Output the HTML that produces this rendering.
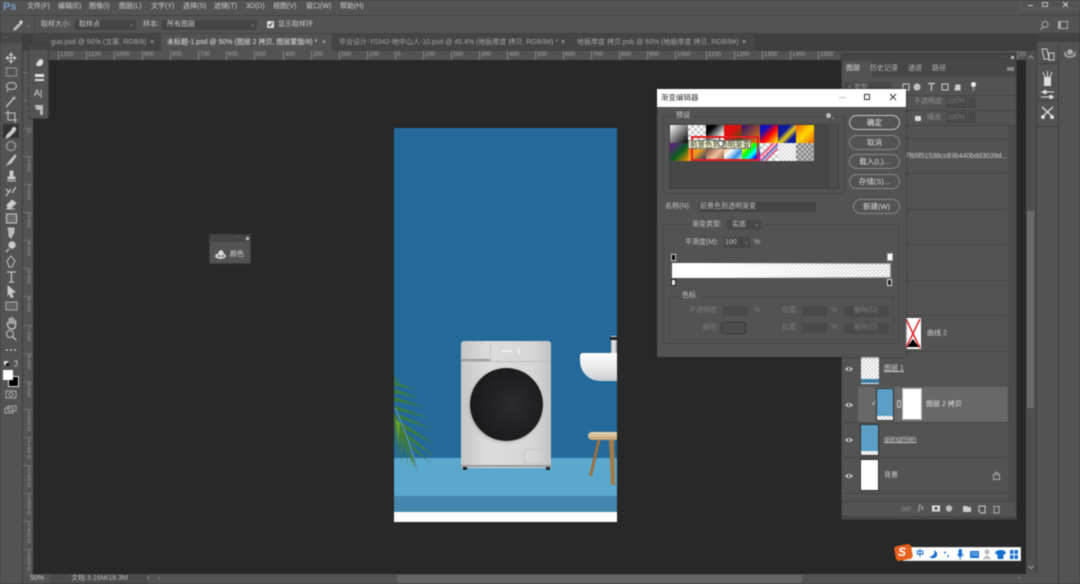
<!DOCTYPE html>
<html><head><meta charset="utf-8"><style>
*{box-sizing:border-box;margin:0;padding:0}
html,body{width:1080px;height:584px;overflow:hidden;background:#282828}
body{font-family:"Liberation Sans","Noto Sans CJK SC",sans-serif;color:#cfcfcf;font-size:7px;position:relative}
#r{position:absolute;left:0;top:0;width:1080px;height:584px;filter:blur(.5px);overflow:hidden}
.a,.t{position:absolute;white-space:nowrap}
.t{line-height:10px}
.rl{position:absolute;top:51px;font-size:6px;color:#a5a5a5;line-height:9px;border-left:1px solid #858585;padding-left:1px;height:9px}
.vr{position:absolute;left:26px;width:6px;font-size:6px;line-height:5.6px;color:#a0a0a0;text-align:center;white-space:normal}
.vr::before{content:"";position:absolute;left:-3px;width:10px;top:-2px;border-top:1px solid #6f6f6f}
.btn{position:absolute;border:1px solid #888;border-radius:8px;text-align:center;color:#ddd;font-size:7.5px;line-height:13px;height:15px}
.sw{position:absolute;width:18px;height:18px}
.ck{background:repeating-conic-gradient(#c8c8c8 0 25%,#fff 0 50%) 0 0/6px 6px}
.ck2{background:repeating-conic-gradient(#d5d5d5 0 25%,#fff 0 50%) 0 0/4px 4px}
.dis{position:absolute;background:#4a4a4a;border:1px solid #494949}
.row{position:absolute;left:844px;width:164px;height:1px;background:#454545}
svg{position:absolute;overflow:visible}
</style></head><body><div id="r">

<!-- top bars -->
<div class="a" style="left:0;top:0;width:1080px;height:16px;background:#535353"></div>
<div class="a" style="left:0;top:15px;width:1080px;height:1px;background:#444"></div>
<div class="a" style="left:0;top:16px;width:1080px;height:18px;background:#535353"></div>
<div class="a" style="left:0;top:33px;width:1080px;height:1px;background:#434343"></div>
<div class="t" style="left:3px;top:0;font-size:11px;line-height:15px;font-weight:bold;color:#6f9cc4">Ps</div>
<div class="t" style="left:27px;top:2px;color:#d0d0d0">文件(F)</div>
<div class="t" style="left:58px;top:2px;color:#d0d0d0">编辑(E)</div>
<div class="t" style="left:89px;top:2px;color:#d0d0d0">图像(I)</div>
<div class="t" style="left:119px;top:2px;color:#d0d0d0">图层(L)</div>
<div class="t" style="left:151px;top:2px;color:#d0d0d0">文字(Y)</div>
<div class="t" style="left:183px;top:2px;color:#d0d0d0">选择(S)</div>
<div class="t" style="left:214px;top:2px;color:#d0d0d0">滤镜(T)</div>
<div class="t" style="left:246px;top:2px;color:#d0d0d0">3D(D)</div>
<div class="t" style="left:273px;top:2px;color:#d0d0d0">视图(V)</div>
<div class="t" style="left:306px;top:2px;color:#d0d0d0">窗口(W)</div>
<div class="t" style="left:340px;top:2px;color:#d0d0d0">帮助(H)</div>
<!-- window buttons -->
<div class="a" style="left:1021px;top:0;width:59px;height:9px;border:1px solid #5f5f5f;border-top:0"></div>
<div class="a" style="left:1028px;top:5px;width:5px;height:1px;background:#ccc"></div>
<div class="a" style="left:1042px;top:2px;width:6px;height:5px;border:1px solid #bbb"></div>
<svg style="left:1062px;top:1px" width="7" height="7"><path d="M1 1L6 6M6 1L1 6" stroke="#ccc" stroke-width="1.1"/></svg>
<!-- options -->
<svg style="left:11px;top:19px" width="14" height="14"><path d="M2 12L3 9L8 4L10 6L5 11Z" fill="#bbb"/><path d="M8 3L10 1L12 3L10 6Z" fill="#ddd"/></svg>
<div class="t" style="left:26px;top:21px;font-size:6px;color:#aaa">⌄</div>
<div class="a" style="left:34px;top:19px;width:1px;height:12px;background:#444"></div>
<div class="t" style="left:41px;top:20px;color:#c5c5c5">取样大小:</div>
<div class="a" style="left:75px;top:20px;width:61px;height:10px;background:#454545;border-radius:1px"></div>
<div class="t" style="left:79px;top:20px;color:#ccc">取样点</div>
<div class="t" style="left:129px;top:20px;font-size:6px;color:#aaa">⌄</div>
<div class="t" style="left:143px;top:20px;color:#c5c5c5">样本:</div>
<div class="a" style="left:162px;top:20px;width:95px;height:10px;background:#454545;border-radius:1px"></div>
<div class="t" style="left:167px;top:20px;color:#ccc">所有图层</div>
<div class="t" style="left:250px;top:20px;font-size:6px;color:#aaa">⌄</div>
<div class="a" style="left:267px;top:21px;width:7px;height:7px;background:#ddd;border-radius:1px"></div>
<svg style="left:267px;top:21px" width="7" height="7"><path d="M1.5 3.5L3 5L5.5 1.5" fill="none" stroke="#333"/></svg>
<div class="t" style="left:278px;top:20px;color:#ccc">显示取样环</div>
<svg style="left:1039px;top:20px" width="11" height="11"><circle cx="6" cy="4.5" r="3" fill="none" stroke="#aaa"/><path d="M4 7L1.5 9.5" stroke="#aaa" stroke-width="1.2"/></svg>
<div class="a" style="left:1058px;top:21px;width:10px;height:8px;border:1px solid #aaa;border-left-width:3px"></div>

<!-- tabs -->
<div class="a" style="left:0;top:34px;width:1080px;height:17px;background:#3f3f3f"></div>
<div class="a" style="left:33px;top:34px;width:128px;height:17px;background:#454545"></div>
<div class="a" style="left:161px;top:34px;width:171px;height:17px;background:#535353"></div>
<div class="a" style="left:333px;top:34px;width:238px;height:17px;background:#454545"></div>
<div class="a" style="left:571px;top:34px;width:184px;height:17px;background:#454545"></div>
<div class="t" style="left:51px;top:38px;color:#a8a8a8">guo.psd @ 50% (文案, RGB/8)</div>
<div class="t" style="left:150px;top:38px;color:#bbb">×</div>
<div class="t" style="left:167px;top:38px;color:#e2e2e2">未标题-1.psd @ 50% (图层 2 拷贝, 图层蒙版/8) *</div>
<div class="t" style="left:322px;top:38px;color:#ccc">×</div>
<div class="t" style="left:339px;top:38px;color:#a5a5a5">毕业设计-Y0342-地中山人-10.psd @ 45.4% (地板厚度 拷贝, RGB/8#) *</div>
<div class="t" style="left:561px;top:38px;color:#ccc">×</div>
<div class="t" style="left:577px;top:38px;color:#a5a5a5">地板厚度 拷贝.psb @ 50% (地板厚度 拷贝, RGB/8#)</div>
<div class="t" style="left:742px;top:38px;color:#ccc">×</div>

<!-- rulers -->
<div class="a" style="left:23px;top:51px;width:1004px;height:9px;background:#535353"></div>
<div class="a" style="left:23px;top:51px;width:10px;height:523px;background:#535353"></div>
<div class="rl" style="left:58px">1200</div><div class="rl" style="left:86px">1100</div><div class="rl" style="left:114px">1000</div><div class="rl" style="left:142px">900</div><div class="rl" style="left:170px">800</div><div class="rl" style="left:198px">700</div><div class="rl" style="left:226px">600</div><div class="rl" style="left:254px">500</div><div class="rl" style="left:283px">400</div><div class="rl" style="left:311px">300</div><div class="rl" style="left:339px">200</div><div class="rl" style="left:367px">100</div><div class="rl" style="left:395px">0</div><div class="rl" style="left:423px">100</div><div class="rl" style="left:451px">200</div><div class="rl" style="left:479px">300</div><div class="rl" style="left:507px">400</div><div class="rl" style="left:535px">500</div><div class="rl" style="left:563px">600</div><div class="rl" style="left:591px">700</div><div class="rl" style="left:619px">800</div><div class="rl" style="left:647px">900</div><div class="rl" style="left:675px">1000</div><div class="rl" style="left:706px">1100</div><div class="rl" style="left:734px">1200</div><div class="rl" style="left:762px">1300</div><div class="rl" style="left:790px">1400</div><div class="rl" style="left:818px">1500</div><div class="rl" style="left:1017px">200</div>
<div class="vr" style="top:74px">2<br>0<br>0</div><div class="vr" style="top:102px">1<br>0<br>0</div><div class="vr" style="top:130px">0</div><div class="vr" style="top:158px">1<br>0<br>0</div><div class="vr" style="top:186px">2<br>0<br>0</div><div class="vr" style="top:214px">3<br>0<br>0</div><div class="vr" style="top:242px">4<br>0<br>0</div><div class="vr" style="top:270px">5<br>0<br>0</div><div class="vr" style="top:298px">6<br>0<br>0</div><div class="vr" style="top:327px">7<br>0<br>0</div><div class="vr" style="top:355px">8<br>0<br>0</div><div class="vr" style="top:383px">9<br>0<br>0</div><div class="vr" style="top:411px">1<br>0<br>0<br>0</div><div class="vr" style="top:439px">1<br>1<br>0<br>0</div><div class="vr" style="top:467px">1<br>2<br>0<br>0</div><div class="vr" style="top:495px">1<br>3<br>0<br>0</div><div class="vr" style="top:523px">1<br>4<br>0<br>0</div><div class="vr" style="top:551px">1<br>5<br>0<br>0</div>

<!-- left toolbar -->
<div class="a" style="left:0;top:34px;width:23px;height:550px;background:#535353"></div>
<div class="a" style="left:22px;top:34px;width:1px;height:550px;background:#3c3c3c"></div>
<div class="a" style="left:0;top:34px;width:22px;height:9px;background:#474747"></div>
<div class="t" style="left:3px;top:34px;font-size:6px;color:#bbb">‥</div>
<div class="a" style="left:3px;top:124px;width:16px;height:14px;background:#333"></div>
<svg style="left:0;top:50px" width="22" height="370" fill="none" stroke="#c4c4c4" stroke-width="1">
<path d="M11 3V13M6 8H16M11 3L9.5 5H12.5ZM11 13L9.5 11H12.5ZM6 8L8 6.5V9.5ZM16 8L14 6.5V9.5Z" fill="#c4c4c4"/>
<rect x="6.5" y="18" width="10" height="8" stroke-dasharray="1.5 1"/>
<ellipse cx="11.5" cy="36" rx="5" ry="3.5"/><path d="M8 39L7 42"/>
<path d="M6 57L13 49" stroke-width="1.4"/><path d="M14 46V50M12 48H16"/>
<path d="M8 60V70H17M5 63H15V73"/>
<path d="M6 88L7 85L12 80L14 82L9 87Z" fill="#ccc"/><path d="M12 79L14 77L16 79L14 82Z" fill="#ddd"/>
<circle cx="11" cy="96" r="4.5" stroke-dasharray="1.5 1" stroke-width="1.4"/>
<path d="M7 115L9 112L15 105L16 106L11 113Z" fill="#ccc"/>
<path d="M8 127H15V129H8ZM10 121H13V127H10Z" fill="#ccc"/><path d="M7 131H16"/>
<path d="M6 146L11 139M12 143L16 137M6 139L9 142" stroke-width="1.3"/>
<path d="M7 155L12 150L16 153L11 158H8Z" fill="#ccc"/><path d="M6 159H15"/>
<rect x="6.5" y="164" width="10" height="9" fill="#6d6d6d" stroke="#ccc"/>
<path d="M8 178H14V182L11 188L9 186V182Z" fill="#b8b8b8"/>
<circle cx="12" cy="195" r="3.2" fill="#ccc"/><path d="M9 199L6 202" stroke-width="1.4"/>
<path d="M11 206L15 211L12 217H9L7 211Z"/>
<path d="M7 222H16M11.5 222V232M9 232H14" stroke-width="1.3"/>
<path d="M8 236L15 242L11.5 242.5L13 247L11 247.5L9.5 243L8 245Z" fill="#ccc"/>
<rect x="6" y="252" width="11" height="8" stroke="#aaa" fill="#636363"/>
<path d="M7.5 272V275Q8.5 279 12 279Q15.5 279 15.5 275V270M9.5 274V268M11.5 274V267M13.5 274V268" stroke-width="1.4"/>
<circle cx="10" cy="284" r="3.5"/><path d="M13 287L16 290" stroke-width="1.4"/>
<path d="M6 300H8M10 300H12M14 300H16" stroke-width="1.5"/>
<path d="M14 311H17V315M14 316H17" stroke="#bbb"/>
<rect x="6" y="341" width="10" height="7" stroke="#aaa"/><circle cx="11" cy="344.5" r="2" stroke="#aaa"/>
<rect x="5" y="358" width="8" height="5" stroke="#aaa"/><rect x="8" y="356" width="8" height="5" stroke="#aaa"/>
</svg>
<div class="a" style="left:4px;top:361px;width:4px;height:4px;background:#ddd"></div>
<div class="a" style="left:6px;top:363px;width:3px;height:3px;background:#111"></div>
<div class="a" style="left:8px;top:376px;width:11px;height:11px;background:#000;border:1px solid #ddd"></div>
<div class="a" style="left:3px;top:370px;width:10px;height:10px;background:#fff"></div>

<!-- small floating panel -->
<div class="a" style="left:28px;top:43px;width:21px;height:76px;background:#535353;border:1px solid #3e3e3e"></div>
<div class="a" style="left:29px;top:44px;width:19px;height:6px;background:#444"></div>
<svg style="left:28px;top:43px" width="21" height="76">
<circle cx="11" cy="19" r="4.2" fill="#ddd"/><path d="M8 22A4.2 4.2 0 0 1 14 16Q10 16 8 22Z" fill="#555"/>
<path d="M7 31H16V34H7Z M7 36H16V38H7Z" fill="#ddd"/>
<path d="M7 62H15V72H12V67H10Q7 67 7 62Z" fill="#bbb"/>
</svg>
<div class="t" style="left:34px;top:88px;font-size:9px;color:#ddd">A|</div>

<!-- document -->
<div class="a" style="left:394px;top:128px;width:223px;height:394px;background:#236a9a;overflow:hidden">
<div class="a" style="left:0;top:330px;width:223px;height:38px;background:#5ba8ce"></div>
<div class="a" style="left:0;top:368px;width:223px;height:16px;background:#4486ad"></div>
<div class="a" style="left:0;top:384px;width:223px;height:10px;background:#fff"></div>
<!-- washer -->
<div class="a" style="left:67px;top:213px;width:90px;height:127px;background:linear-gradient(90deg,#c6c6c6,#dcdcdc 30%,#d6d6d6 80%,#c4c4c4);border-radius:3px 3px 0 0"></div>
<div class="a" style="left:67px;top:231px;width:29px;height:1.5px;background:#9a9a9a"></div>
<div class="a" style="left:67px;top:232.5px;width:90px;height:1px;background:#bdbdbd"></div>
<div class="a" style="left:96px;top:215px;width:1px;height:17px;background:#c4c4c4"></div>
<div class="a" style="left:67px;top:337px;width:90px;height:2px;background:#999"></div>
<div class="a" style="left:69px;top:339px;width:4px;height:2.5px;background:#222"></div>
<div class="a" style="left:152px;top:339px;width:4px;height:2.5px;background:#222"></div>
<div class="a" style="left:75.5px;top:240px;width:73px;height:73px;border-radius:50%;background:radial-gradient(circle at 58% 50%,#2b2b2d,#1b1b1d 70%);box-shadow:-1px 1px 3px #aaa"></div>
<div class="a" style="left:130px;top:321px;width:23px;height:15px;border:1px solid #c6c6c6;border-radius:2px"></div>
<div class="a" style="left:108px;top:222px;width:10px;height:2px;background:#f0f0f0"></div>
<div class="a" style="left:124px;top:221px;width:2px;height:5px;background:#eee"></div>
<!-- sink -->
<div class="a" style="left:217px;top:208px;width:6px;height:17px;background:linear-gradient(90deg,#bbb,#eee,#999)"></div>
<div class="a" style="left:216px;top:209px;width:7px;height:3px;background:#222"></div>
<div class="a" style="left:186px;top:225px;width:40px;height:28px;background:linear-gradient(#fff,#e6e6e6 60%,#c9ced4);border-radius:3px 0 0 20px"></div>
<!-- stool -->
<svg style="left:190px;top:300px" width="40" height="60"><path d="M14 10L5 48H8L17 10Z" fill="#9b6f3f"/><path d="M25 10L27 57H31L30 10Z" fill="#a47a48"/></svg>
<div class="a" style="left:194px;top:304px;width:34px;height:8px;background:linear-gradient(#e6d8b4,#c59f6f);border-radius:4px 0 0 4px"></div>
<!-- palm -->
<svg style="left:0;top:245px" width="44" height="100">
<g fill="#3c7a3e">
<path d="M0 3L6 9L0 6Z"/><path d="M0 8L21 17L0 12Z"/><path d="M0 16L26 25L0 20Z"/><path d="M0 24L31 34L0 28Z"/><path d="M1 33L36 45L1 37Z"/><path d="M4 41L41 57L4 45Z"/><path d="M7 49L42 72L6 54Z"/><path d="M10 58L41 84L9 63Z"/><path d="M13 67L36 90L12 71Z"/>
</g>
<g fill="#447f2e">
<path d="M0 40L1 75L3 44Z"/><path d="M3 46L4 86L7 50Z"/><path d="M6 54L8 90L10 58Z"/><path d="M9 62L14 94L12 66Z"/><path d="M12 72L20 96L15 75Z"/><path d="M15 80L24 99L18 82Z"/>
</g>
<path d="M2 46L4 70L6 50Z" fill="#6aa22f"/>
<path d="M1 35Q8 50 13 64T24 99" stroke="#5a92b4" stroke-width="1.2" fill="none"/>
</svg>
</div>

<!-- colour mini panel -->
<div class="a" style="left:209px;top:234px;width:42px;height:30px;background:#535353;border:1px solid #3e3e3e"></div>
<div class="a" style="left:210px;top:235px;width:40px;height:7px;background:#454545"></div>
<div class="t" style="left:234px;top:233px;font-size:6px;color:#bbb">‥</div>
<div class="a" style="left:246px;top:237px;width:3px;height:3px;background:#bbb"></div>
<svg style="left:214px;top:250px" width="14" height="10"><ellipse cx="6.5" cy="6" rx="5.5" ry="3" fill="#ccc"/><circle cx="7" cy="2.8" r="2.5" fill="#ddd"/><circle cx="5" cy="6" r="1" fill="#555"/><circle cx="8.5" cy="6" r="1" fill="#555"/></svg>
<div class="t" style="left:230px;top:250px;color:#d8d8d8">颜色</div>

<!-- scrollbar and right docks -->
<div class="a" style="left:1026px;top:51px;width:11px;height:523px;background:#4f4f4f"></div>
<div class="a" style="left:1027px;top:211px;width:7px;height:197px;background:#6b6b6b"></div>
<svg style="left:1028px;top:55px" width="6" height="515" fill="none" stroke="#999"><path d="M0.5 3.5L3 1L5.5 3.5M0.5 511L3 513.5L5.5 511"/></svg>
<div class="a" style="left:1037px;top:34px;width:43px;height:550px;background:#535353"></div>
<div class="a" style="left:1036px;top:51px;width:1px;height:533px;background:#3f3f3f"></div>
<div class="a" style="left:1058px;top:34px;width:1px;height:550px;background:#3f3f3f"></div>
<div class="a" style="left:1037px;top:34px;width:43px;height:8px;background:#434343"></div>
<div class="a" style="left:1037px;top:63px;width:21px;height:1px;background:#414141"></div>
<div class="a" style="left:1037px;top:100px;width:21px;height:1px;background:#414141"></div>
<div class="a" style="left:1037px;top:126px;width:21px;height:1px;background:#414141"></div>
<svg style="left:1040px;top:47px" width="16" height="14" fill="none" stroke="#ccc"><path d="M2 2H7L9 12H4Z"/><rect x="9" y="6" width="5" height="7"/></svg>
<svg style="left:1040px;top:71px" width="16" height="56" fill="#ddd" stroke="#ddd">
<path d="M4 6H11V15H4Z" stroke="none"/><path d="M5 6L3 1M7.5 6V0M10 6L12 1" fill="none"/>
<path d="M1 21H14M1 26H14" fill="none"/><circle cx="5" cy="21" r="1.5"/><circle cx="11" cy="26" r="1.5"/>
<path d="M2 36L13 46M13 36L2 46" fill="none" stroke-width="1.3"/><circle cx="3" cy="46" r="1.5"/><circle cx="12" cy="46" r="1.5"/>
</svg>
<svg style="left:1063px;top:47px" width="14" height="12"><ellipse cx="7" cy="7" rx="6" ry="4" fill="#999"/><circle cx="7" cy="5" r="3.5" fill="#aaa" stroke="#444"/></svg>

<!-- layers panel -->
<div class="a" style="left:841px;top:53px;width:176px;height:467px;background:#535353;border:1px solid #3a3a3a"></div>
<div class="a" style="left:842px;top:54px;width:174px;height:7px;background:#454545"></div>
<div class="a" style="left:842px;top:61px;width:174px;height:16px;background:#474747"></div>
<div class="a" style="left:842px;top:61px;width:30px;height:16px;background:#535353"></div>
<div class="t" style="left:846px;top:64px;color:#e0e0e0">图层</div>
<div class="t" style="left:870px;top:64px;color:#b5b5b5">历史记录</div>
<div class="t" style="left:908px;top:64px;color:#b5b5b5">通道</div>
<div class="t" style="left:932px;top:64px;color:#b5b5b5">路径</div>
<div class="a" style="left:1007px;top:67px;width:7px;height:4px;background:#888"></div>
<div class="t" style="left:1000px;top:53px;font-size:6px;color:#bbb">‥</div>
<div class="a" style="left:1011px;top:56px;width:3px;height:3px;background:#bbb"></div>
<div class="a" style="left:844px;top:82px;width:47px;height:11px;background:#484848"></div>
<div class="t" style="left:848px;top:83px;color:#999">⌕ 类型</div>
<svg style="left:900px;top:81px" width="90" height="12" fill="none" stroke="#ccc"><rect x="3" y="3" width="6" height="6"/><circle cx="17" cy="6" r="3" fill="#bbb"/><path d="M28 2.5H35M31.5 2.5V10" stroke-width="1.3"/><rect x="42" y="3" width="6" height="6"/><path d="M56 4H60V9H55Z" fill="#ccc"/></svg>
<div class="a" style="left:971px;top:82px;width:5px;height:5px;border-radius:50%;background:#ededed"></div>
<div class="a" style="left:972px;top:87px;width:3px;height:4px;background:#777"></div>
<div class="a" style="left:842px;top:95px;width:174px;height:1px;background:#444"></div>
<div class="t" style="left:914px;top:97px;color:#8f8f8f">不透明度:</div>
<div class="a" style="left:946px;top:97px;width:21px;height:11px;background:#484848"></div>
<div class="t" style="left:947px;top:97px;color:#777">100%</div>
<div class="a" style="left:968px;top:97px;width:8px;height:11px;background:#484848"></div>
<div class="a" style="left:842px;top:110px;width:174px;height:1px;background:#444"></div>
<div class="a" style="left:915px;top:116px;width:6px;height:5px;background:#ddd;border-radius:1px"></div>
<div class="t" style="left:927px;top:113px;color:#8f8f8f">填充:</div>
<div class="a" style="left:946px;top:112px;width:21px;height:11px;background:#484848"></div>
<div class="t" style="left:947px;top:113px;color:#777">100%</div>
<div class="a" style="left:968px;top:112px;width:8px;height:11px;background:#484848"></div>
<div class="a" style="left:842px;top:125px;width:174px;height:1px;background:#444"></div>
<div class="a" style="left:1008px;top:126px;width:8px;height:375px;background:#4b4b4b"></div>
<div class="row" style="top:138px"></div><div class="row" style="top:173px"></div><div class="row" style="top:209px"></div><div class="row" style="top:244px"></div><div class="row" style="top:280px"></div><div class="row" style="top:315px"></div><div class="row" style="top:351px"></div><div class="row" style="top:422px"></div><div class="row" style="top:457px"></div><div class="row" style="top:493px"></div>
<div class="t" style="left:905px;top:152px;color:#d0d0d0">7f65f51538cc83b440bdd3039d...</div>
<!-- curves row -->
<div class="a" style="left:905px;top:318px;width:16px;height:31px;background:#fff"></div>
<svg style="left:905px;top:318px" width="16" height="31"><path d="M2 29L8 21L14 29Z" fill="#000"/><path d="M1 1L15 30M15 1L1 30" stroke="#e03030" stroke-width="1.6"/></svg>
<div class="t" style="left:927px;top:329px;color:#d0d0d0">曲线 2</div>
<!-- layer 1 -->
<div class="a ck2" style="left:861px;top:356px;width:18px;height:28px"></div>
<div class="a" style="left:861px;top:379px;width:18px;height:4px;background:#3d7ea8"></div>
<div class="t" style="left:884px;top:364px;color:#d0d0d0;text-decoration:underline">图层 1</div>
<!-- selected -->
<div class="a" style="left:858px;top:387px;width:150px;height:35px;background:#686868"></div>
<div class="a" style="left:876px;top:388px;width:18px;height:33px;background:#5b9fc6;border:1px solid #2e2e2e"></div>
<div class="a ck2" style="left:877px;top:416px;width:16px;height:4px"></div>
<div class="t" style="left:871px;top:399px;font-size:6px;color:#ccc">↲</div>
<div class="a" style="left:897px;top:400px;width:4px;height:8px;border:1px solid #ccc;border-radius:2px"></div>
<div class="a" style="left:903px;top:389px;width:18px;height:30px;background:#fff;box-shadow:0 0 0 1px #aaa"></div>
<div class="t" style="left:926px;top:400px;color:#e0e0e0">图层 2 拷贝</div>
<!-- qiangmian -->
<div class="a" style="left:860px;top:424px;width:19px;height:32px;background:#5b9fc6;border:1px solid #2e2e2e"></div>
<div class="a ck2" style="left:861px;top:451px;width:17px;height:4px"></div>
<div class="t" style="left:884px;top:435px;color:#d0d0d0;text-decoration:underline">qiangmian</div>
<!-- bg -->
<div class="a" style="left:860px;top:459px;width:19px;height:32px;background:#fff;border:1px solid #2e2e2e"></div>
<div class="t" style="left:884px;top:471px;color:#d0d0d0">背景</div>
<svg style="left:992px;top:471px" width="9" height="9" fill="none" stroke="#aaa"><rect x="1.5" y="3.5" width="6" height="5"/><path d="M3 3.5V2Q4.5 .5 6 2V3.5"/></svg>
<!-- eyes -->
<svg style="left:845px;top:364px" width="9" height="120" fill="#ccc"><path d="M0 5Q4 1 8 5Q4 9 0 5Z"/><path d="M0 41Q4 37 8 41Q4 45 0 41Z"/><path d="M0 76Q4 72 8 76Q4 80 0 76Z"/><path d="M0 112Q4 108 8 112Q4 116 0 112Z"/><circle cx="4" cy="5" r="1.2" fill="#444"/><circle cx="4" cy="41" r="1.2" fill="#444"/><circle cx="4" cy="76" r="1.2" fill="#444"/><circle cx="4" cy="112" r="1.2" fill="#444"/></svg>
<!-- footer -->
<div class="a" style="left:842px;top:501px;width:174px;height:1px;background:#424242"></div>
<div class="a" style="left:842px;top:516px;width:174px;height:3px;background:#474747"></div>
<svg style="left:900px;top:503px" width="105" height="12" fill="none" stroke="#ccc">
<path d="M3 6H9" stroke="#777"/><circle cx="3.5" cy="6" r="2" stroke="#777"/><circle cx="8.5" cy="6" r="2" stroke="#777"/>
<rect x="32" y="2.5" width="8" height="6" fill="#ddd" stroke="none"/><circle cx="36" cy="5.5" r="1.5" fill="#444" stroke="none"/>
<circle cx="49" cy="5.5" r="3.2" fill="#bbb" stroke="none"/>
<path d="M63 3H67L68 4H71V9H63Z" fill="#ccc" stroke="none"/>
<path d="M79 3H85V10H81L79 8Z"/>
<path d="M93 3.5H100M94 4V10H99V4" stroke="#aaa"/>
</svg>
<div class="t" style="left:918px;top:503px;font-size:8px;font-style:italic;color:#ccc;font-family:'Liberation Serif',serif">fx</div>

<!-- dialog -->
<div class="a" style="left:657px;top:89px;width:249px;height:268px;background:#535353;box-shadow:0 0 2px #222"></div>
<div class="a" style="left:657px;top:89px;width:249px;height:18px;background:#fff"></div>
<div class="t" style="left:661px;top:93px;color:#333;font-size:7.5px">渐变编辑器</div>
<div class="a" style="left:839px;top:97px;width:7px;height:1px;background:#bbb"></div>
<div class="a" style="left:864px;top:94px;width:6px;height:6px;border:1px solid #333"></div>
<svg style="left:889px;top:93px" width="8" height="8"><path d="M1 1L7 7M7 1L1 7" stroke="#333"/></svg>
<!-- presets -->
<div class="a" style="left:663px;top:116px;width:182px;height:78px;border:1px solid #464646"></div>
<div class="a" style="left:672px;top:112px;width:21px;height:9px;background:#535353"></div>
<div class="t" style="left:676px;top:111px;color:#cfcfcf">预设</div>
<svg style="left:825px;top:112px" width="10" height="8"><circle cx="3.5" cy="3.5" r="2.3" fill="#ddd"/><circle cx="3.5" cy="3.5" r=".8" fill="#555"/><circle cx="8" cy="6" r=".6" fill="#ddd"/></svg>
<div class="a" style="left:669px;top:124px;width:170px;height:65px;background:#474747;border:1px solid #404040"></div>
<div class="a" style="left:830px;top:125px;width:8px;height:63px;background:#4e4e4e"></div>
<div class="sw" style="left:670px;top:125px;background:linear-gradient(135deg,#fff,#000)"></div>
<div class="sw ck" style="left:688px;top:125px"></div>
<div class="sw" style="left:706px;top:125px;background:linear-gradient(135deg,#000 25%,#fff 75%)"></div>
<div class="sw" style="left:724px;top:125px;background:linear-gradient(135deg,#e01010 40%,#106010)"></div>
<div class="sw" style="left:742px;top:125px;background:linear-gradient(135deg,#2a1070,#f08000)"></div>
<div class="sw" style="left:760px;top:125px;background:linear-gradient(135deg,#1010c0 25%,#f00 55%,#ff0)"></div>
<div class="sw" style="left:778px;top:125px;background:linear-gradient(135deg,#0a1a9a 35%,#f0d010 55%,#0a1a9a 75%)"></div>
<div class="sw" style="left:796px;top:125px;background:linear-gradient(135deg,#f06000,#ffd800 50%,#f06000)"></div>
<div class="sw" style="left:670px;top:143px;background:linear-gradient(135deg,#701090,#0a6020 55%,#f09000)"></div>
<div class="sw" style="left:688px;top:143px;background:linear-gradient(135deg,#e06010,#f0a020 50%,#103080)"></div>
<div class="sw" style="left:706px;top:143px;background:linear-gradient(135deg,#401808,#f0c0a0 60%,#805030)"></div>
<div class="sw" style="left:724px;top:143px;background:linear-gradient(135deg,#c08010,#fff 40%,#3090e0 70%,#fff)"></div>
<div class="sw" style="left:742px;top:143px;background:linear-gradient(135deg,#f00,#ff0,#0f0,#0ff,#00f,#f0f)"></div>
<div class="sw ck" style="left:760px;top:143px"></div>
<svg style="left:760px;top:143px" width="18" height="18"><path d="M0 14L14 0M0 18L18 0M5 18L18 5" stroke="#f04070" stroke-width="1.5"/><path d="M2 18L18 2" stroke="#30a0f0" stroke-width="1.5"/></svg>
<div class="sw ck2" style="left:778px;top:143px"></div>
<div class="sw" style="left:796px;top:143px;background:repeating-conic-gradient(#808080 0 25%,#c4c4c4 0 50%) 0 0/5px 5px"></div>
<div class="a" style="left:691px;top:136px;width:68px;height:25px;border:2px solid #e42020"></div>
<div class="a" style="left:688px;top:140px;width:63px;height:9px;background:#fbfad0;border:1px solid #777"></div>
<div class="t" style="left:690px;top:139.5px;font-size:7.5px;color:#222">前景色到透明渐变</div>
<svg style="left:717px;top:137px" width="7" height="9"><path d="M2 1V5L1 6L3 9H6V5L3 4V1Z" fill="#fff" stroke="#333" stroke-width=".6"/></svg>
<!-- buttons -->
<div class="btn" style="left:849px;top:115px;width:51px;border-color:#c4c4c4;color:#eee">确定</div>
<div class="btn" style="left:849px;top:135px;width:51px">取消</div>
<div class="btn" style="left:849px;top:154px;width:51px">载入(L)...</div>
<div class="btn" style="left:849px;top:174px;width:51px">存储(S)...</div>
<div class="btn" style="left:853px;top:199px;width:47px">新建(W)</div>
<div class="t" style="left:665px;top:202px;color:#c5c5c5">名称(N):</div>
<div class="a" style="left:699px;top:202px;width:117px;height:10px;background:#454545"></div>
<div class="t" style="left:700px;top:202px;color:#c5c5c5">前景色到透明渐变</div>
<!-- gradient group -->
<div class="a" style="left:663px;top:224px;width:236px;height:120px;border:1px solid #464646"></div>
<div class="a" style="left:690px;top:219px;width:76px;height:11px;background:#535353"></div>
<div class="t" style="left:692px;top:220px;color:#c5c5c5">渐变类型:</div>
<div class="a" style="left:727px;top:220px;width:34px;height:10px;background:#484848"></div>
<div class="t" style="left:732px;top:220px;color:#c5c5c5">实底</div>
<div class="t" style="left:754px;top:220px;font-size:6px;color:#aaa">⌄</div>
<div class="t" style="left:685px;top:238px;color:#c5c5c5">平滑度(M):</div>
<div class="a" style="left:724px;top:237px;width:26px;height:11px;background:#484848"></div>
<div class="a" style="left:741px;top:237px;width:1px;height:11px;background:#3c3c3c"></div>
<div class="t" style="left:725px;top:238px;color:#c5c5c5">100</div>
<div class="t" style="left:744px;top:238px;font-size:6px;color:#aaa">⌄</div>
<div class="t" style="left:754px;top:238px;color:#bbb">%</div>
<div class="a ck2" style="left:672px;top:263px;width:219px;height:15px;border:1px solid #999"></div>
<div class="a" style="left:672px;top:263px;width:219px;height:15px;background:linear-gradient(90deg,#fff 15%,rgba(255,255,255,0) 92%)"></div>
<div class="a" style="left:671px;top:254px;width:5px;height:7px;background:#000;border:1px solid #ccc"></div>
<div class="a" style="left:887px;top:253px;width:6px;height:8px;background:#fff;border:1px solid #aaa"></div>
<div class="a ck2" style="left:671px;top:279px;width:5px;height:7px;background-color:#fff;background-size:3px 3px;border:1px solid #222"></div>
<div class="a" style="left:887px;top:279px;width:5px;height:7px;background:#222;border:1px solid #ddd"></div>
<!-- colour stops -->
<div class="a" style="left:669px;top:296px;width:225px;height:44px;border:1px solid #484848"></div>
<div class="a" style="left:678px;top:291px;width:22px;height:10px;background:#535353"></div>
<div class="t" style="left:682px;top:291px;color:#c5c5c5">色标</div>
<div class="t" style="left:689px;top:306px;color:#7d7d7d">不透明度:</div>
<div class="dis" style="left:723px;top:306px;width:25px;height:10px"></div>
<div class="t" style="left:754px;top:306px;color:#7d7d7d">%</div>
<div class="t" style="left:782px;top:306px;color:#7d7d7d">位置:</div>
<div class="dis" style="left:802px;top:306px;width:25px;height:10px"></div>
<div class="t" style="left:831px;top:306px;color:#7d7d7d">%</div>
<div class="dis" style="left:844px;top:306px;width:45px;height:11px"></div>
<div class="t" style="left:854px;top:306px;color:#7d7d7d">删除(D)</div>
<div class="t" style="left:703px;top:323px;color:#7d7d7d">颜色:</div>
<div class="a" style="left:721px;top:322px;width:25px;height:12px;background:#4c4c4c;border:1px solid #3c3c3c"></div>
<div class="t" style="left:782px;top:323px;color:#7d7d7d">位置:</div>
<div class="dis" style="left:802px;top:323px;width:25px;height:10px"></div>
<div class="t" style="left:831px;top:323px;color:#7d7d7d">%</div>
<div class="dis" style="left:844px;top:323px;width:45px;height:11px"></div>
<div class="t" style="left:854px;top:323px;color:#7d7d7d">删除(D)</div>

<!-- status -->
<div class="a" style="left:23px;top:574px;width:1014px;height:10px;background:#535353"></div>
<div class="a" style="left:50px;top:574px;width:98px;height:10px;background:#4b4b4b"></div>
<div class="t" style="left:30px;top:574px;color:#ccc">50%</div>
<div class="t" style="left:71px;top:574px;color:#bbb">文档:3.16M/18.3M</div>
<div class="t" style="left:147px;top:574px;color:#ccc">›</div>
<div class="t" style="left:158px;top:574px;color:#999">‹</div>
<div class="a" style="left:397px;top:575px;width:405px;height:8px;background:#666"></div>
<div class="t" style="left:1018px;top:574px;color:#999">›</div>

<!-- sogou bar -->
<div class="a" style="left:903px;top:547px;width:118px;height:14px;background:#fff;border:1px solid #ddd"></div>
<div class="a" style="left:895px;top:545px;width:17px;height:15px;background:#e8611c;border-radius:3px;transform:rotate(-10deg)"></div>
<div class="t" style="left:898px;top:547px;font-size:12px;font-weight:bold;color:#fff;line-height:11px;font-style:italic">S</div>
<div class="t" style="left:916px;top:549px;font-size:8px;font-weight:bold;color:#1670d0">中</div>
<svg style="left:928px;top:549px" width="90" height="11" fill="#1670d0">
<path d="M6 1Q8 6 1 8Q6 11 9 7Q10 3 6 1Z"/>
<circle cx="17" cy="3.5" r="1"/><path d="M20 5L21 8L19 8Z"/>
<rect x="30.5" y="0" width="3.5" height="7" rx="1.7"/><path d="M29.5 5Q32.2 10 35.5 5M32.2 8V10.5" fill="none" stroke="#1670d0"/>
<rect x="42" y="2" width="9" height="7" fill="#1670d0"/><path d="M43 4H50M43 6H50" stroke="#bcd8f5" stroke-width=".7"/>
<circle cx="59" cy="3" r="2.5" fill="#bbb"/><path d="M55 10Q59 3 63 10Z" fill="#bbb"/>
<path d="M68 2L71 1H74L77 2L78 5L75.5 5.5V10H69.5V5.5L67 5Z"/>
<rect x="82" y="1" width="3.5" height="4"/><rect x="86.5" y="1" width="3.5" height="4"/><rect x="82" y="6" width="3.5" height="4"/><rect x="86.5" y="6" width="3.5" height="4"/>
</svg>
</div></body></html>
